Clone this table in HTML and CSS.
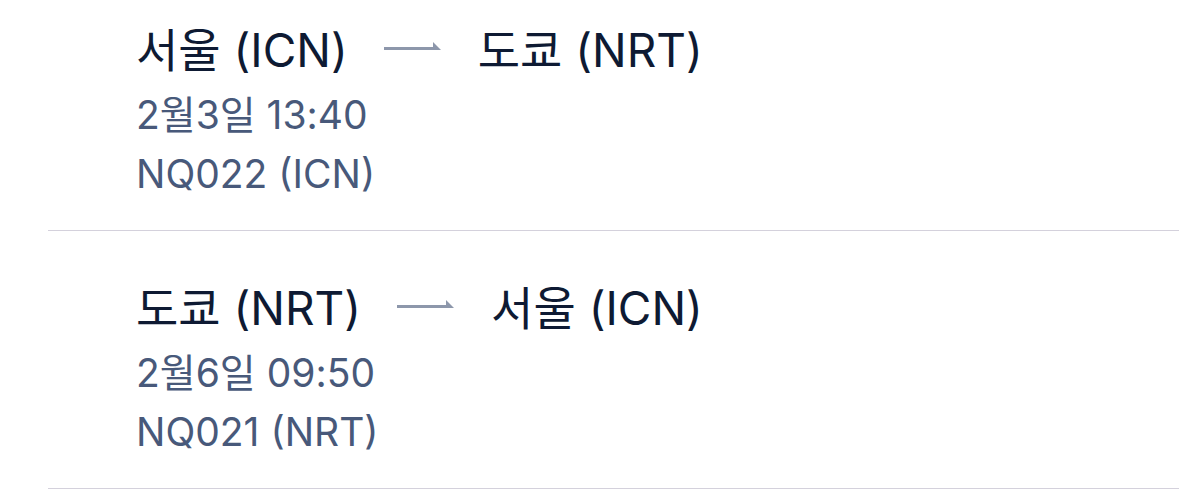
FILE: index.html
```html
<!DOCTYPE html>
<html lang="ko">
<head>
    <meta charset="utf-8">
    <title>항공편</title>
    <link rel="stylesheet" href="styles.css">
</head>
<body>
    <div class="trip-list">
        <div class="trip">
            <div class="route">
                <span class="city">서울 (ICN)</span>
                <svg class="arrow" width="58" height="10" viewBox="0 0 58 10">
                    <rect x="0" y="6" width="54" height="3" fill="#8d97ab"/>
                    <polygon points="49,1 57,9 49,9" fill="#8d97ab"/>
                </svg>
                <span class="city">도쿄 (NRT)</span>
            </div>
            <div class="meta">2월3일 13:40</div>
            <div class="meta">NQ022 (ICN)</div>
        </div>
        <div class="trip">
            <div class="route">
                <span class="city">도쿄 (NRT)</span>
                <svg class="arrow" width="58" height="10" viewBox="0 0 58 10">
                    <rect x="0" y="6" width="54" height="3" fill="#8d97ab"/>
                    <polygon points="49,1 57,9 49,9" fill="#8d97ab"/>
                </svg>
                <span class="city">서울 (ICN)</span>
            </div>
            <div class="meta">2월6일 09:50</div>
            <div class="meta">NQ021 (NRT)</div>
        </div>
    </div>
</body>
</html>
```

FILE: styles.css
```css
* {
    box-sizing: border-box;
    margin: 0;
    padding: 0;
}

body {
    font-family: Inter, "Noto Sans CJK KR", sans-serif;
    background: #fff;
    overflow: hidden;
}

.trip-list {
    padding-left: 48px;
}

.trip {
    padding: 19px 0 27px 88px;
    border-bottom: 1px solid #d4d1dc;
}

.trip + .trip {
    padding-top: 46px;
}

.route {
    display: flex;
    align-items: center;
    gap: 36px;
    height: 56px;
    margin-bottom: 10px;
}

.city {
    font-size: 46px;
    color: #0e1a33;
}

.arrow {
    display: block;
    margin-top: -2px;
}

.meta {
    font-size: 39px;
    color: #48597a;
    line-height: 59px;
}
```
